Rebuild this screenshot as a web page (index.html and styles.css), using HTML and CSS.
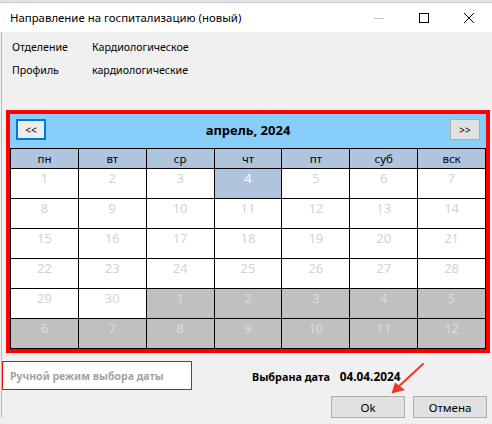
FILE: index.html
```html
<!DOCTYPE html>
<html lang="ru">
<head>
<meta charset="utf-8">
<title>Направление на госпитализацию</title>
<link rel="stylesheet" href="styles.css">
</head>
<body>
<div class="topstrip"></div>
<div class="titlebar">
  <span class="title">Направление на госпитализацию (новый)</span>
  <div class="controls">
    <div class="ctrl"><svg width="12" height="12" viewBox="0 0 12 12"><line x1="1" y1="6.5" x2="11" y2="6.5" stroke="#c4c4c4" stroke-width="1"/></svg></div>
    <div class="ctrl"><svg width="12" height="12" viewBox="0 0 12 12"><rect x="1.5" y="1.5" width="9" height="9" fill="none" stroke="#000" stroke-width="1"/></svg></div>
    <div class="ctrl"><svg width="12" height="12" viewBox="0 0 12 12"><path d="M1 1 L11 11 M11 1 L1 11" stroke="#000" stroke-width="1"/></svg></div>
  </div>
</div>
<div class="main">
  <div class="info">
    <span>Отделение</span><span>Кардиологическое</span>
    <span>Профиль</span><span>кардиологические</span>
  </div>
  <div class="calendar">
    <div class="cal-head">
      <div class="nav focus">&lt;&lt;</div>
      <div class="month">апрель, 2024</div>
      <div class="nav">&gt;&gt;</div>
    </div>
    <div class="grid">
      <div class="dh">пн</div><div class="dh">вт</div><div class="dh">ср</div><div class="dh">чт</div><div class="dh">пт</div><div class="dh">суб</div><div class="dh">вск</div>
      <div class="d">1</div><div class="d">2</div><div class="d">3</div><div class="d sel">4</div><div class="d">5</div><div class="d">6</div><div class="d">7</div>
      <div class="d">8</div><div class="d">9</div><div class="d">10</div><div class="d">11</div><div class="d">12</div><div class="d">13</div><div class="d">14</div>
      <div class="d">15</div><div class="d">16</div><div class="d">17</div><div class="d">18</div><div class="d">19</div><div class="d">20</div><div class="d">21</div>
      <div class="d">22</div><div class="d">23</div><div class="d">24</div><div class="d">25</div><div class="d">26</div><div class="d">27</div><div class="d">28</div>
      <div class="d">29</div><div class="d">30</div><div class="d out">1</div><div class="d out">2</div><div class="d out">3</div><div class="d out">4</div><div class="d out">5</div>
      <div class="d out">6</div><div class="d out">7</div><div class="d out">8</div><div class="d out">9</div><div class="d out">10</div><div class="d out">11</div><div class="d out">12</div>
    </div>
  </div>
  <div class="row1">
    <div class="manual">Ручной режим выбора даты</div>
    <div class="selected"><span class="sel-label">Выбрана дата</span><span class="sel-date">04.04.2024</span></div>
  </div>
  <div class="buttons">
    <div class="btn">Ok</div>
    <div class="btn">Отмена</div>
  </div>
</div>
<svg class="arrow" width="492" height="424" viewBox="0 0 492 424">
  <line x1="423" y1="364" x2="396" y2="389" stroke="#e8392c" stroke-width="2" stroke-linecap="round"/>
  <polygon points="391.5,393.5 395,382.5 405,390" fill="#e8392c"/>
</svg>
</body>
</html>
```
FILE: styles.css
```css
html, body {
  margin: 0;
  padding: 0;
}
body {
  width: 492px;
  height: 424px;
  overflow: hidden;
  position: relative;
  background: #f0f0f0;
  font-family: "Noto Sans", "Liberation Sans", sans-serif;
  font-size: 11px;
  color: #000;
}
.topstrip {
  height: 2px;
  background: #e4e4e4;
  border-bottom: 1px solid #c8c8c8;
}
.titlebar {
  height: 29px;
  background: #fff;
  display: flex;
  align-items: center;
  padding-left: 10px;
  padding-right: 1px;
}
.title {
  flex: 1;
  font-size: 11.4px;
  padding-bottom: 1px;
}
.controls {
  display: flex;
}
.ctrl {
  width: 45px;
  height: 29px;
  display: flex;
  align-items: center;
  justify-content: center;
}
.main {
  border-left: 1px solid #b9b9b9;
  margin-left: 1px;
  margin-right: 0;
}
.info {
  display: grid;
  grid-template-columns: 80px auto;
  row-gap: 7px;
  line-height: 16px;
  font-size: 10.6px;
  padding: 7px 0 0 10px;
}
.calendar {
  margin: 32px 0 0 4px;
  width: 476px;
  border: 4px solid #ff0000;
}
.cal-head {
  height: 34px;
  box-sizing: border-box;
  background: #87cefa;
  display: flex;
  align-items: flex-start;
  padding: 5px 6px 0 6px;
}
.nav {
  width: 30px;
  height: 21px;
  box-sizing: border-box;
  background: #e1e1e1;
  border: 1px solid #adadad;
  font-size: 10px;
  line-height: 1;
  display: flex;
  align-items: center;
  justify-content: center;
}
.nav.focus {
  border: 2px solid #0078d7;
  background: #ededed;
}
.month {
  flex: 1;
  text-align: center;
  font-weight: bold;
  font-size: 13px;
  line-height: 21px;
  padding-top: 1px;
}
.grid {
  display: grid;
  grid-template-columns: repeat(7, 1fr);
  grid-template-rows: 19px repeat(6, 29px);
  gap: 1px;
  padding: 1px;
  background: #000;
}
.dh {
  background: #b0c4de;
  text-align: center;
  line-height: 20px;
  font-size: 11.5px;
}
.dh + .dh {
  box-shadow: -1px 0 0 #000;
}
.d {
  background: #fff;
  color: #d3d3d3;
  text-align: center;
  font-size: 13px;
  line-height: 15px;
  padding-top: 2px;
}
.d.sel {
  background: #b0c4de;
  color: #fff;
}
.d.out {
  background: #c0c0c0;
  color: #dcdcdc;
}
.row1 {
  display: flex;
  align-items: center;
  margin-top: 8px;
}
.manual {
  width: 190px;
  height: 29px;
  box-sizing: border-box;
  border: 1px solid #ff0000;
  background: #fff;
  color: #a3a3a3;
  font-weight: bold;
  font-size: 10.5px;
  padding-left: 7px;
  display: flex;
  align-items: center;
}
.selected {
  margin-left: 60px;
  font-weight: bold;
  display: flex;
  align-items: baseline;
  gap: 10px;
}
.sel-label {
  font-size: 10.8px;
}
.sel-date {
  font-size: 11.8px;
}
.buttons {
  display: flex;
  justify-content: flex-end;
  gap: 8px;
  padding-right: 5px;
  margin-top: 6px;
}
.btn {
  width: 74px;
  height: 22px;
  box-sizing: border-box;
  border: 1px solid #adadad;
  background: #e1e1e1;
  display: flex;
  align-items: center;
  justify-content: center;
  font-size: 11.5px;
}
.arrow {
  position: absolute;
  left: 0;
  top: 0;
  pointer-events: none;
}
```
